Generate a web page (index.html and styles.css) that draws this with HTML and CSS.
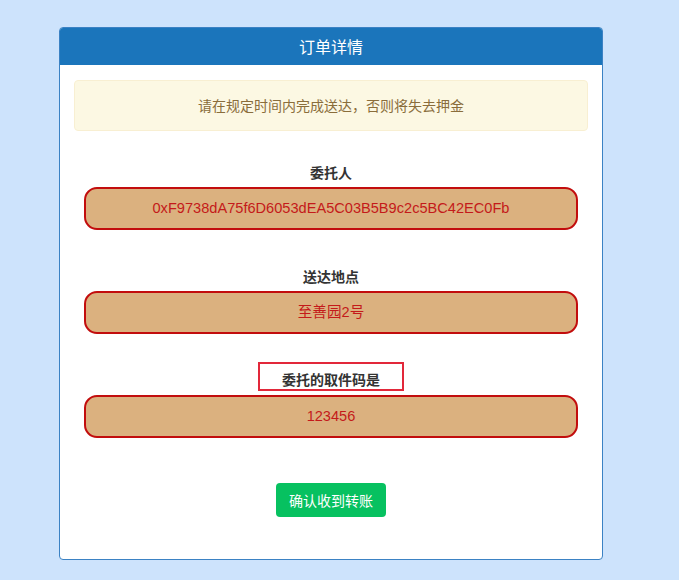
FILE: index.html
```html
<!DOCTYPE html>
<html lang="zh">
<head>
<meta charset="utf-8">
<title>订单详情</title>
<link rel="stylesheet" href="styles.css">
</head>
<body>
<div class="page">
  <div class="panel">
    <div class="panel-heading">订单详情</div>
    <div class="panel-body">
      <div class="alert">请在规定时间内完成送达，否则将失去押金</div>
      <div class="fields">
        <div class="group">
          <div class="label">委托人</div>
          <div class="field">0xF9738dA75f6D6053dEA5C03B5B9c2c5BC42EC0Fb</div>
        </div>
        <div class="group">
          <div class="label">送达地点</div>
          <div class="field">至善园2号</div>
        </div>
        <div class="group group-code">
          <div class="label"><span class="mark">委托的取件码是</span></div>
          <div class="field">123456</div>
        </div>
        <div class="actions">
          <button class="btn">确认收到转账</button>
        </div>
      </div>
    </div>
  </div>
</div>
</body>
</html>
```

FILE: styles.css
```css
html, body {
  margin: 0;
  padding: 0;
  background: #cde3fc;
  font-family: "Liberation Sans", "Noto Sans CJK SC", sans-serif;
  font-size: 14px;
  color: #333;
}
.page {
  height: 580px;
  padding: 27px 0 0 59px;
  box-sizing: border-box;
}
.panel {
  width: 544px;
  height: 533px;
  box-sizing: border-box;
  background: #fff;
  border: 1px solid #3b82c4;
  border-radius: 4px;
  overflow: hidden;
}
.panel-heading {
  background: #1b75bb;
  color: #fff;
  height: 37px;
  line-height: 37px;
  text-align: center;
  font-size: 16px;
  font-family: "Noto Sans CJK SC", sans-serif;
}
.panel-body {
  padding: 15px 14px 0;
}
.alert {
  height: 51px;
  box-sizing: border-box;
  background: #fcf8e3;
  border: 1px solid #f8efd2;
  border-radius: 4px;
  color: #8a6d3b;
  text-align: center;
  line-height: 49px;
  font-family: "Noto Sans CJK SC", sans-serif;
}
.fields {
  padding: 0 10px;
}
.group {
  margin-top: 31px;
}
.group + .group {
  margin-top: 36px;
}
.group.group-code {
  margin-top: 28px;
}
.label {
  text-align: center;
  line-height: 20px;
  height: 20px;
  font-family: "Noto Sans CJK SC", sans-serif;
  font-weight: 700;
  color: #333;
  margin-bottom: 5px;
}
.group-code .label {
  height: 29px;
  margin-bottom: 4px;
}
.mark {
  display: inline-block;
  padding: 5px 22px 0;
  border: 2px solid #e2283a;
  line-height: 20px;
}
.field {
  height: 43px;
  box-sizing: border-box;
  background: #dbb17f;
  border: 2px solid #c20d0d;
  border-radius: 13px;
  color: #c41a1a;
  text-align: center;
  line-height: 39px;
  font-size: 14.6px;
}
.actions {
  margin-top: 45px;
  display: flex;
  justify-content: center;
}
.btn {
  width: 110px;
  height: 34px;
  border: none;
  border-radius: 4px;
  background: #07c160;
  color: #fff;
  font-family: "Noto Sans CJK SC", sans-serif;
  font-size: 14px;
  padding: 0;
}
```
